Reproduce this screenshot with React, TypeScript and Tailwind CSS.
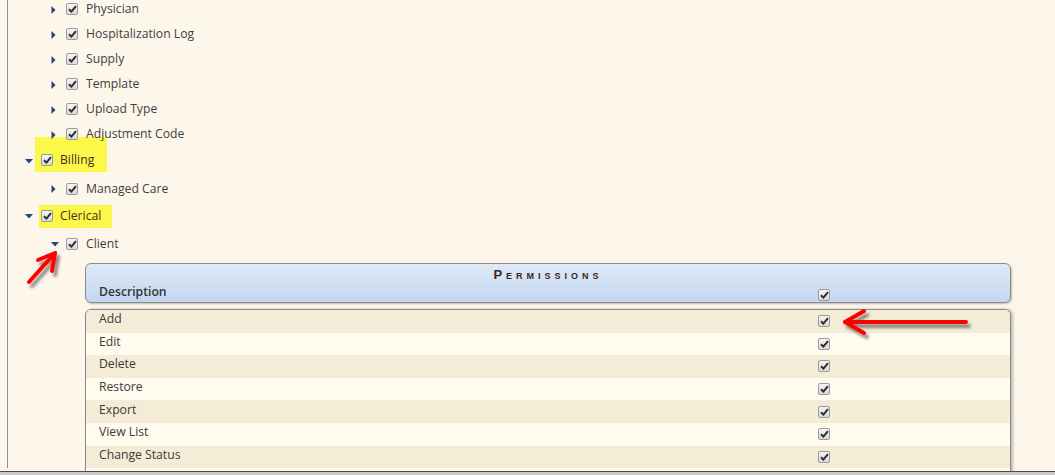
import React from 'react';

const font = { fontFamily: '"Open Sans", "Liberation Sans", sans-serif' };

function Check() {
  return (
    <span className="inline-flex items-center justify-center w-[12px] h-[12px] rounded-[2px] border border-[#9b9b9b] bg-gradient-to-b from-[#f4f4f4] to-[#d9d9d9] shrink-0">
      <svg width="9" height="8" viewBox="0 0 9 8">
        <path d="M1 4.2 L3.4 6.6 L8 1.2" fill="none" stroke="#2e2e2e" strokeWidth="2" />
      </svg>
    </span>
  );
}

function Caret({ open }: { open: boolean }) {
  return open ? (
    <svg width="8" height="5" viewBox="0 0 8 5" className="shrink-0">
      <path d="M0 0 L8 0 L4 4.5 Z" fill="#23427f" />
    </svg>
  ) : (
    <svg width="5" height="8" viewBox="0 0 5 8" className="shrink-0">
      <path d="M0.5 0 L4.5 4 L0.5 8 Z" fill="#23427f" />
    </svg>
  );
}

interface NodeProps {
  label: string;
  level: 1 | 2;
  open?: boolean;
  height: string;
  highlight?: string;
}

function TreeRow({ label, level, open = false, height, highlight }: NodeProps) {
  // level 2 rows are positioned so they paint above the yellow marker of the next group
  const pad = level === 1 ? 'pl-[17px]' : 'pl-[43px] relative';
  const caretBox = level === 1 ? 'w-[10px]' : 'w-[15px]';
  return (
    <div className={`flex items-center ${height} ${pad}`}>
      <div className={`${caretBox} flex items-center justify-start`}>
        <Caret open={open} />
      </div>
      <div className={`flex items-center ${level === 1 ? 'gap-[7px]' : 'gap-[8px]'} ${highlight ?? ''}`}>
        <Check />
        <span
          className={`text-[12.2px] leading-none ${level === 1 ? 'text-[#4a2c1c]' : 'text-[#3f3f3f]'}`}
        >
          {label}
        </span>
      </div>
    </div>
  );
}

const perms = ['Add', 'Edit', 'Delete', 'Restore', 'Export', 'View List', 'Change Status', 'Unassign'];

function RedArrows() {
  return (
    <svg
      className="absolute left-0 top-0 pointer-events-none"
      width="1055"
      height="475"
      viewBox="0 0 1055 475"
    >
      <defs>
        <filter id="sh" x="-20%" y="-50%" width="140%" height="200%">
          <feGaussianBlur in="SourceAlpha" stdDeviation="1.6" />
          <feOffset dx="3" dy="4" result="b" />
          <feComponentTransfer>
            <feFuncA type="linear" slope="0.45" />
          </feComponentTransfer>
          <feMerge>
            <feMergeNode />
            <feMergeNode in="SourceGraphic" />
          </feMerge>
        </filter>
      </defs>
      <g filter="url(#sh)" stroke="#ff0000" strokeWidth="4" strokeLinecap="round" fill="none">
        <path d="M29 282 L55 253" />
        <path d="M55 253 L38 260 M55 253 L52 271" />
        <path d="M966 322 L845 322" />
        <path d="M845 322 L864 311 M845 322 L864 333" />
      </g>
    </svg>
  );
}

export default function App() {
  return (
    <div className="relative w-[1055px] h-[475px] overflow-hidden bg-[#fdf6eb]" style={font}>
      <div className="h-[471px] pl-[7px] overflow-hidden">
        <div className="h-full border-l border-[#8f8f8f]">
          <div className="mt-[-3px]">
            <TreeRow label="Physician" level={2} height="h-[25px]" />
            <TreeRow label="Hospitalization Log" level={2} height="h-[25px]" />
            <TreeRow label="Supply" level={2} height="h-[25px]" />
            <TreeRow label="Template" level={2} height="h-[25px]" />
            <TreeRow label="Upload Type" level={2} height="h-[25px]" />
            <TreeRow label="Adjustment Code" level={2} height="h-[25px]" />
            <TreeRow
              label="Billing"
              level={1}
              open
              height="h-[29px]"
              highlight="bg-[#fbf84a] pt-[17px] pb-[6px] mt-[-14px] pl-[6px] pr-[13px]"
            />
            <TreeRow label="Managed Care" level={2} height="h-[26px]" />
            <TreeRow
              label="Clerical"
              level={1}
              open
              height="h-[28px]"
              highlight="bg-[#fbf84a] h-[23px] ml-[4px] pl-[2px] pr-[11px]"
            />
            <TreeRow label="Client" level={2} open height="h-[28px]" />
          </div>

          <div className="ml-[77px] w-[926px] mt-[5px]">
            <div className="h-[40px] rounded-[6px] border border-[#8a8a8a] bg-gradient-to-b from-[#dfe9f6] to-[#c4d7f0] shadow-[1px_1px_2px_rgba(0,0,0,0.25)] flex flex-col">
              <div
                className="text-center text-[#3b2626] font-bold tracking-[4px] pt-[3px] leading-[16px] text-[13px]"
                style={{ fontFamily: '"Liberation Sans", Arial, sans-serif', fontVariant: 'small-caps' }}
              >
                Permissions
              </div>
              <div className="flex items-center h-[20px] pl-[13px]">
                <span className="flex-1 text-[12.2px] font-semibold text-[#333] leading-none">Description</span>
                <div className="w-[192px] flex pt-[4px]">
                  <Check />
                </div>
              </div>
            </div>

            <div className="mt-[6px] rounded-t-[6px] border border-b-0 border-[#8a8a8a] overflow-hidden shadow-[2px_0_3px_rgba(0,0,0,0.25)]">
              {perms.map((p, i) => (
                <div
                  key={p}
                  className={`flex items-center h-[22.6px] pl-[13px] ${i % 2 === 0 ? 'bg-[#f4ecd6]' : 'bg-[#fffbef]'}`}
                >
                  <span className="flex-1 text-[12.2px] text-[#3a3a3a] leading-none pb-[4px]">{p}</span>
                  <div className="w-[192px] flex">
                    <Check />
                  </div>
                </div>
              ))}
            </div>
          </div>
        </div>
      </div>
      <div className="h-[4px] border-t border-[#4a4a4a] bg-[#c9c9c9]" />
      <RedArrows />
    </div>
  );
}
